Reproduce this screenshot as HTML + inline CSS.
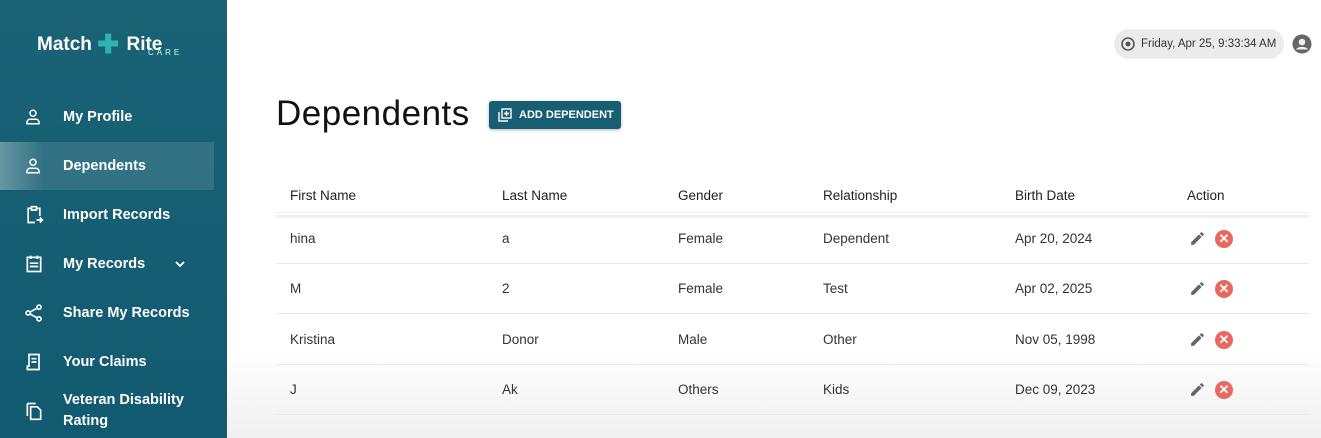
<!DOCTYPE html>
<html><head><meta charset="utf-8"><style>
*{margin:0;padding:0;box-sizing:border-box}
body{width:1321px;height:438px;overflow:hidden;background:#fff;font-family:"Liberation Sans",sans-serif;position:relative}
.sb{position:absolute;left:0;top:0;width:227px;height:438px;background:linear-gradient(180deg,#1a6274,#115a70)}
.logo{position:absolute;left:37px;top:29px;color:#fff;font-weight:bold;font-size:19px;white-space:nowrap}
.nav{position:absolute;left:0;width:227px;height:48px;color:#fff;font-weight:bold;font-size:14.5px}
.nav span{position:absolute;left:63px;top:50%;transform:translateY(-50%)}
.nav svg{position:absolute;left:24px;top:50%;transform:translateY(-50%)}
.act{width:214px;background:linear-gradient(90deg,rgba(255,255,255,.35),rgba(255,255,255,.12) 20%,rgba(255,255,255,.12))}
.pill{position:absolute;left:1114px;top:29px;width:170px;height:30px;border-radius:15px;background:#ebebeb;font-size:11.5px;color:#333;line-height:30px;padding-left:27px}
h1{position:absolute;left:276px;top:94px;font-weight:normal;font-size:35px;color:#111;letter-spacing:.5px}
.btn{position:absolute;left:489px;top:101px;width:132px;height:28px;background:#175e72;border-radius:3px;color:#fff;font-size:11px;font-weight:bold;line-height:28px;padding-left:30px;box-shadow:0 1px 3px rgba(0,0,0,.3)}
.th{position:absolute;top:188px;font-size:13.5px;color:#222;z-index:2}
.hl{position:absolute;left:276px;top:212px;width:1033px;height:3px;box-shadow:0 2px 3px rgba(0,0,0,.12);border-top:1px solid #eee}
.td{position:absolute;font-size:13.5px;color:#333;z-index:2}
.rl{position:absolute;left:276px;width:1033px;height:1px;background:#e8e8e8}
.x{position:absolute;width:18px;height:18px;border-radius:50%;background:#e8685f;color:#fff;font-size:13px;font-weight:bold;text-align:center;line-height:18px;z-index:2}
.ic{z-index:2}
.fade{position:absolute;left:227px;top:350px;width:1094px;height:88px;background:linear-gradient(180deg,rgba(240,240,240,0),rgba(236,236,236,.8));z-index:1}
</style></head><body>
<div class="sb">
<div class="logo">Match <span style="display:inline-block;color:#2fb3b3;font-size:26px;vertical-align:-3px;width:24px">✚</span> Rite<div style="position:absolute;left:111px;top:19px;font-size:8px;letter-spacing:3px;font-weight:normal;color:#cfe">CARE</div></div>
<div class="nav" style="top:93px"><svg width="18" height="18" viewBox="0 0 24 24" fill="none" stroke="#fff" stroke-width="2"><circle cx="12" cy="7" r="4"/><path d="M4 21v-2a4 4 0 014-4h8a4 4 0 014 4v2z"/></svg><span>My Profile</span></div>
<div class="nav act" style="top:142px"><svg width="18" height="18" viewBox="0 0 24 24" fill="none" stroke="#fff" stroke-width="2"><circle cx="12" cy="7" r="4"/><path d="M4 21v-2a4 4 0 014-4h8a4 4 0 014 4v2z"/></svg><span>Dependents</span></div>
<div class="nav" style="top:191px"><svg width="20" height="20" viewBox="0 0 24 24" fill="none" stroke="#fff" stroke-width="2"><path d="M9 4H5v17h8M15 4h4v9M9 2h6v4H9zM15 18h7m-3-3l3 3-3 3"/></svg><span>Import Records</span></div>
<div class="nav" style="top:240px"><svg width="20" height="20" viewBox="0 0 24 24" fill="none" stroke="#fff" stroke-width="2"><rect x="4" y="4" width="16" height="17"/><path d="M8 2v4M16 2v4M7 11h10M7 15h10"/></svg><span>My Records</span><svg style="left:174px" width="12" height="12" viewBox="0 0 12 12" fill="none" stroke="#fff" stroke-width="1.8"><path d="M2 4l4 4 4-4"/></svg></div>
<div class="nav" style="top:289px"><svg width="20" height="20" viewBox="0 0 24 24" fill="none" stroke="#fff" stroke-width="2"><circle cx="18" cy="5" r="2.5"/><circle cx="5" cy="12" r="2.5"/><circle cx="18" cy="19" r="2.5"/><path d="M7 11l9-5M7 13l9 5"/></svg><span>Share My Records</span></div>
<div class="nav" style="top:338px"><svg width="20" height="20" viewBox="0 0 24 24" fill="none" stroke="#fff" stroke-width="2"><path d="M6 3h12v18H4v-4h2zM9 8h6M9 12h6"/></svg><span>Your Claims</span></div>
<div class="nav" style="top:388px;height:46px"><svg width="20" height="20" viewBox="0 0 24 24" fill="none" stroke="#fff" stroke-width="2"><path d="M4 3h10M4 3v15M8 7h8l4 4v11H8z"/></svg><span style="line-height:21px">Veteran Disability<br>Rating</span></div>
</div>
<div class="pill"><svg style="position:absolute;left:6px;top:7px" width="16" height="16" viewBox="0 0 16 16"><circle cx="8" cy="8" r="6" fill="none" stroke="#555" stroke-width="1.6"/><circle cx="8" cy="8" r="2.5" fill="#555"/></svg>Friday, Apr 25, 9:33:34 AM</div>
<svg style="position:absolute;left:1292px;top:34px" width="20" height="20" viewBox="0 0 20 20"><circle cx="10" cy="10" r="9.5" fill="#666"/><circle cx="10" cy="8" r="3.3" fill="#eee"/><path d="M4 15.5c2-3.5 10-3.5 12 0" fill="#eee"/></svg>
<h1>Dependents</h1>
<div class="btn"><svg style="position:absolute;left:9px;top:7px" width="14" height="14" viewBox="0 0 14 14" fill="none" stroke="#fff" stroke-width="1.4"><rect x="4" y="1" width="9" height="9"/><path d="M1 4v9h9M8.5 3v5M6 5.5h5"/></svg>ADD DEPENDENT</div>
<div class="th" style="left:290px">First Name</div><div class="th" style="left:502px">Last Name</div><div class="th" style="left:678px">Gender</div><div class="th" style="left:823px">Relationship</div><div class="th" style="left:1015px">Birth Date</div><div class="th" style="left:1187px">Action</div>
<div class="hl"></div>
<div class="td" style="left:290px;top:231px">hina</div><div class="td" style="left:502px;top:231px">a</div><div class="td" style="left:678px;top:231px">Female</div><div class="td" style="left:823px;top:231px">Dependent</div><div class="td" style="left:1015px;top:231px">Apr 20, 2024</div>
<div class="rl" style="top:263px"></div>
<div class="td" style="left:290px;top:281px">M</div><div class="td" style="left:502px;top:281px">2</div><div class="td" style="left:678px;top:281px">Female</div><div class="td" style="left:823px;top:281px">Test</div><div class="td" style="left:1015px;top:281px">Apr 02, 2025</div>
<div class="rl" style="top:313px"></div>
<div class="td" style="left:290px;top:332px">Kristina</div><div class="td" style="left:502px;top:332px">Donor</div><div class="td" style="left:678px;top:332px">Male</div><div class="td" style="left:823px;top:332px">Other</div><div class="td" style="left:1015px;top:332px">Nov 05, 1998</div>
<div class="rl" style="top:364px"></div>
<div class="td" style="left:290px;top:382px">J</div><div class="td" style="left:502px;top:382px">Ak</div><div class="td" style="left:678px;top:382px">Others</div><div class="td" style="left:823px;top:382px">Kids</div><div class="td" style="left:1015px;top:382px">Dec 09, 2023</div>
<div class="rl" style="top:414px"></div>
<svg class="ic" style="position:absolute;left:1189px;top:230px" width="17" height="17" viewBox="0 0 24 24"><path fill="#666" d="M3 17.25V21h3.75L17.8 9.94l-3.75-3.75zM20.7 7.04a1 1 0 000-1.41l-2.34-2.34a1 1 0 00-1.41 0l-1.83 1.83 3.75 3.75z"/></svg><div class="x" style="left:1215px;top:230px">✕</div>
<svg class="ic" style="position:absolute;left:1189px;top:280px" width="17" height="17" viewBox="0 0 24 24"><path fill="#666" d="M3 17.25V21h3.75L17.8 9.94l-3.75-3.75zM20.7 7.04a1 1 0 000-1.41l-2.34-2.34a1 1 0 00-1.41 0l-1.83 1.83 3.75 3.75z"/></svg><div class="x" style="left:1215px;top:280px">✕</div>
<svg class="ic" style="position:absolute;left:1189px;top:331px" width="17" height="17" viewBox="0 0 24 24"><path fill="#666" d="M3 17.25V21h3.75L17.8 9.94l-3.75-3.75zM20.7 7.04a1 1 0 000-1.41l-2.34-2.34a1 1 0 00-1.41 0l-1.83 1.83 3.75 3.75z"/></svg><div class="x" style="left:1215px;top:331px">✕</div>
<svg class="ic" style="position:absolute;left:1189px;top:381px" width="17" height="17" viewBox="0 0 24 24"><path fill="#666" d="M3 17.25V21h3.75L17.8 9.94l-3.75-3.75zM20.7 7.04a1 1 0 000-1.41l-2.34-2.34a1 1 0 00-1.41 0l-1.83 1.83 3.75 3.75z"/></svg><div class="x" style="left:1215px;top:381px">✕</div>
<div class="fade"></div>
</body></html>
